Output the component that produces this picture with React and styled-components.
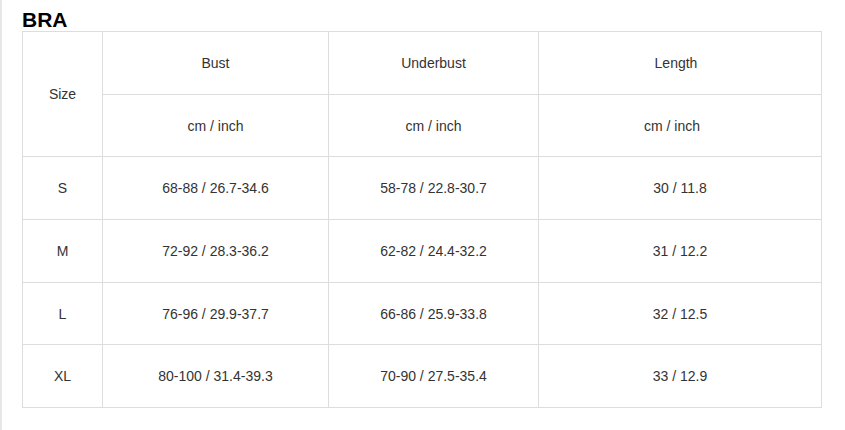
import styled, { createGlobalStyle } from "styled-components";

const GlobalStyle = createGlobalStyle`
  html, body {
    margin: 0;
    padding: 0;
    background: #fff;
  }
  body {
    font-family: "Liberation Sans", Arial, sans-serif;
  }
`;

const Page = styled.div`
  min-height: 430px;
  border-left: 2px solid #e6e6e6;
  padding: 8px 0 0 20px;
  box-sizing: border-box;
`;

const Title = styled.h2`
  margin: 0;
  font-size: 21px;
  line-height: 23px;
  font-weight: bold;
  color: #000;
`;

const Table = styled.table`
  border-collapse: collapse;
  table-layout: fixed;
  width: 799px;
  color: #333;
  font-size: 14px;
`;

const Cell = styled.td`
  border: 1px solid #dddddd;
  height: 61.7px;
  padding: 0 ${(p) => p.$trail || 0}px 0 0;
  text-align: center;
  vertical-align: middle;
`;

const cols = [80, 226, 210, 283];

const rows = [
  ["S", "68-88 / 26.7-34.6", "58-78 / 22.8-30.7", "30 / 11.8"],
  ["M", "72-92 / 28.3-36.2", "62-82 / 24.4-32.2", "31 / 12.2"],
  ["L", "76-96 / 29.9-37.7", "66-86 / 25.9-33.8", "32 / 12.5"],
  ["XL", "80-100 / 31.4-39.3", "70-90 / 27.5-35.4", "33 / 12.9"],
];

export default function App() {
  return (
    <>
      <GlobalStyle />
      <Page>
        <Title>BRA</Title>
        <Table>
          <colgroup>
            {cols.map((w, i) => (
              <col key={i} style={{ width: w }} />
            ))}
          </colgroup>
          <tbody>
            <tr>
              <Cell rowSpan={2}>Size</Cell>
              <Cell>Bust</Cell>
              <Cell>Underbust</Cell>
              <Cell $trail={8}>Length</Cell>
            </tr>
            <tr>
              <Cell>cm / inch</Cell>
              <Cell>cm / inch</Cell>
              <Cell $trail={16}>cm / inch</Cell>
            </tr>
            {rows.map((r) => (
              <tr key={r[0]}>
                {r.map((v, i) => (
                  <Cell key={i}>{v}</Cell>
                ))}
              </tr>
            ))}
          </tbody>
        </Table>
      </Page>
    </>
  );
}
